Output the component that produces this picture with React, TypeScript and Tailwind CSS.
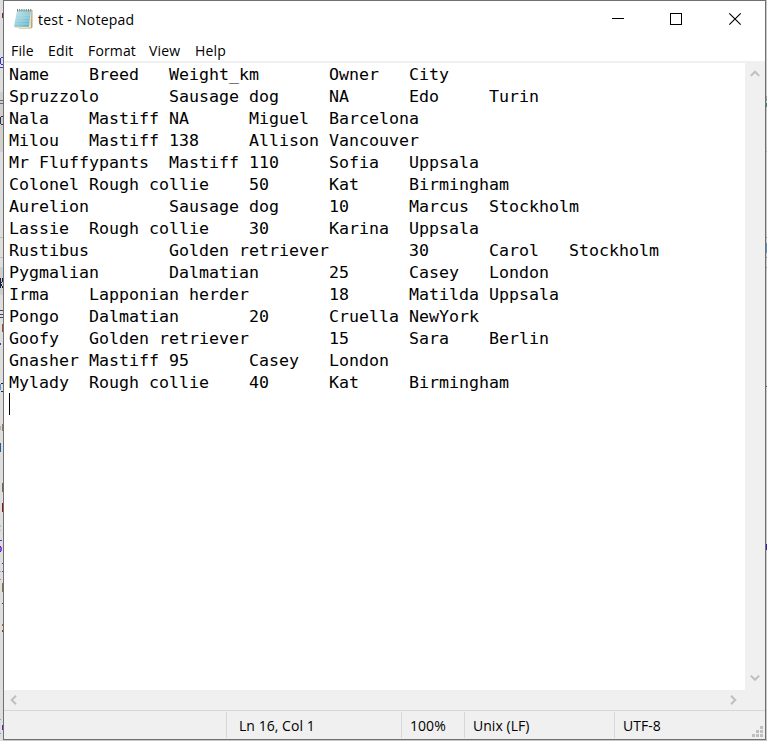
import React from "react";

const rows: string[] = [
  "Name\tBreed\tWeight_km\tOwner\tCity",
  "Spruzzolo\tSausage dog\tNA\tEdo\tTurin",
  "Nala\tMastiff\tNA\tMiguel\tBarcelona",
  "Milou\tMastiff\t138\tAllison\tVancouver",
  "Mr Fluffypants\tMastiff\t110\tSofia\tUppsala",
  "Colonel\tRough collie\t50\tKat\tBirmingham",
  "Aurelion\tSausage dog\t10\tMarcus\tStockholm",
  "Lassie\tRough collie\t30\tKarina\tUppsala",
  "Rustibus\tGolden retriever\t30\tCarol\tStockholm",
  "Pygmalian\tDalmatian\t25\tCasey\tLondon",
  "Irma\tLapponian herder\t18\tMatilda\tUppsala",
  "Pongo\tDalmatian\t20\tCruella\tNewYork",
  "Goofy\tGolden retriever\t15\tSara\tBerlin",
  "Gnasher\tMastiff\t95\tCasey\tLondon",
  "Mylady\tRough collie\t40\tKat\tBirmingham",
];

// Slivers of the editor behind the window: x, y, width, height, colour.
const leftMarks: [number, number, number, number, string][] = [
  [2, 13, 1, 5, "#7a3030"],
  [0, 58, 1, 6, "#3333dd"], [1, 57, 2, 1, "#3333dd"], [1, 64, 2, 1, "#3333dd"], [0, 67, 3, 1, "#3333dd"],
  [0, 92, 3, 60, "#cfcfcb"],
  [0, 100, 3, 1, "#666688"], [0, 103, 3, 1, "#666688"],
  [0, 117, 1, 7, "#333344"], [1, 116, 2, 1, "#333344"], [1, 124, 2, 1, "#333344"],
  [0, 237, 3, 1, "#bcbcbc"], [0, 257, 3, 1, "#bcbcbc"], [0, 267, 3, 28, "#cfcfcf"],
  [0, 278, 1, 10, "#16203a"], [2, 278, 1, 4, "#16203a"], [1, 282, 1, 1, "#16203a"], [1, 284, 1, 2, "#16203a"], [2, 286, 1, 2, "#16203a"],
  [0, 310, 3, 1, "#444466"], [0, 314, 3, 1, "#444466"], [0, 317, 3, 1, "#444466"],
  [2, 324, 1, 8, "#9a4a3a"], [0, 343, 1, 2, "#3333cc"],
  [1, 383, 2, 1, "#222233"], [0, 384, 1, 6, "#5599cc"], [1, 391, 2, 1, "#222233"],
  [0, 426, 1, 4, "#8ab8dd"], [2, 424, 1, 7, "#a8743a"], [0, 443, 1, 9, "#1560aa"],
  [2, 483, 1, 9, "#75654a"], [2, 503, 1, 9, "#8a1515"],
  [0, 525, 1, 2, "#88ccee"], [0, 530, 1, 1, "#88ccee"],
  [0, 540, 2, 1, "#5522ee"], [0, 547, 2, 4, "#9944dd"], [0, 546, 1, 1, "#2222dd"], [0, 551, 1, 1, "#2222dd"],
  [2, 563, 1, 1, "#5533aa"], [0, 571, 1, 1, "#99aadd"], [2, 571, 1, 1, "#5533aa"],
  [0, 579, 1, 1, "#bb77bb"], [2, 583, 1, 9, "#88703a"], [2, 603, 1, 1, "#5522aa"],
  [2, 624, 1, 2, "#b86615"], [2, 630, 1, 2, "#aa2244"],
  [0, 719, 1, 1, "#66aadd"], [2, 725, 1, 5, "#6622bb"], [0, 733, 1, 1, "#66aadd"],
];
const rightMarks: [number, number, number, number, string][] = [
  [0, 96, 1, 5, "#999999"], [0, 103, 1, 4, "#35905f"], [0, 151, 1, 1, "#aaaaaa"],
  [0, 237, 1, 1, "#888888"], [0, 243, 1, 10, "#5b92c5"], [0, 257, 1, 1, "#888888"],
  [0, 267, 1, 1, "#999999"], [0, 386, 1, 1, "#247878"], [0, 544, 1, 6, "#2824bb"],
];

function Strip({ width, marks }: { width: number; marks: [number, number, number, number, string][] }) {
  return (
    <svg className="shrink-0" width={width} height={741} shapeRendering="crispEdges" aria-hidden="true">
      <rect width={width} height="741" fill={width === 3 ? "#dededc" : "#c8c8c8"} />
      {marks.map(([x, y, w, h, c], i) => <rect key={i} x={x} y={y} width={w} height={h} fill={c} />)}
    </svg>
  );
}

function NotepadIcon() {
  return (
    <svg width="21" height="22" viewBox="0 0 21 22" aria-hidden="true">
      <defs>
        <linearGradient id="page" x1="0" y1="0" x2="1" y2="1">
          <stop offset="0" stopColor="#c9eaf1" />
          <stop offset="0.5" stopColor="#94cedb" />
          <stop offset="1" stopColor="#54a9bd" />
        </linearGradient>
      </defs>
      <path d="M4.5 2H19.5V19.5L18 20.5H6Z" fill="#bda578" />
      <path d="M4 2.5H18.5L17.8 19.5L15 20H2Z" fill="#e1e2cf" />
      <path d="M4 2.8H17.8L15.8 18.8H1Z" fill="url(#page)" />
      <path d="M3.5 7H17M3.2 10H16.7M2.8 13H16.3M2.3 16H16" stroke="#b8e1e9" strokeWidth=".6" />
      <path d="M4.5 1V3.5M6.7 1V3.5M8.9 1V3.5M11.1 1V3.5M13.3 1V3.5M15.5 1V3.5M17.7 1V3.5" stroke="#71868d" strokeWidth="1" />
      <path d="M15.8 18.8L18 16.5L17.5 19.7Z" fill="#efebcc" />
    </svg>
  );
}

function Chevron({ direction }: { direction: "up" | "down" | "left" | "right" }) {
  const paths = {
    up: "M.8 6.9L5 2.7L9.2 6.9",
    down: "M.8 2.6L5 6.8L9.2 2.6",
    left: "M7 .8L2.7 5L7 9.2",
    right: "M3 .8L7.3 5L3 9.2",
  };
  return <svg width="10" height="10" viewBox="0 0 10 10"><path d={paths[direction]} fill="none" stroke="#bfbfbf" strokeWidth="2" /></svg>;
}

export default function App() {
  return (
    <div className="flex h-[741px] w-[767px] overflow-hidden bg-[#c8c8c8] font-['Open_Sans','Noto_Sans',sans-serif] text-[14px] leading-[22px] whitespace-nowrap text-black">
      <Strip width={3} marks={leftMarks} />
      <main className="flex h-[740px] w-[763px] flex-col border border-[#707070] bg-white">
        <header className="flex h-[37px] shrink-0 items-start justify-between">
          <div className="flex items-start pt-[7px] pl-[9px]">
            <NotepadIcon />
            <h1 className="ml-1 pt-px tracking-[0.24px]">test - Notepad</h1>
          </div>
          <svg width="160" height="36" viewBox="0 0 160 36" fill="none" stroke="#000">
            <path d="M7 17.5H19" />
            <rect x="65.5" y="12.5" width="11" height="11" />
            <path d="M124.3 12.3L135.7 23.7M135.7 12.3L124.3 23.7" strokeWidth="1.15" />
          </svg>
        </header>
        <nav className="flex h-[23px] shrink-0 items-start pt-[2px] pl-[7px] tracking-[0.15px]">
          <span className="w-[37px]">File</span>
          <span className="w-10">Edit</span>
          <span className="w-[61px]">Format</span>
          <span className="w-[46px]">View</span>
          <span>Help</span>
        </nav>
        <div className="h-[2px] shrink-0 bg-[#f0f0f0]" />
        <div className="flex h-[627px] shrink-0">
          <section className="w-[741px] overflow-hidden pt-px pl-[5px] font-['DejaVu_Sans_Mono',monospace] text-[16.61px] leading-[22px]">
            {rows.map((row) => <div key={row} className="h-[22px] whitespace-pre [tab-size:8]">{row}</div>)}
            <div className="-mt-px h-[22px] w-px bg-black" />
          </section>
          <aside className="flex w-5 flex-col items-center justify-between bg-[#f0f0f0] pt-[6px] pb-[7px]">
            <Chevron direction="up" />
            <Chevron direction="down" />
          </aside>
        </div>
        <div className="flex h-5 shrink-0 items-center justify-between bg-[#f0f0f0] pr-[27px] pl-[5px]">
          <Chevron direction="left" />
          <Chevron direction="right" />
        </div>
        <footer className="flex h-[29px] shrink-0 border-t border-[#d7d7d7] bg-[#f0f0f0] tracking-[0.04px]">
          <div className="mt-px h-[26px] w-[223px] border-r border-[#d7d7d7]" />
          <div className="mt-px h-[26px] w-[175px] border-r border-[#d7d7d7] pt-[3px] pl-[12px]">Ln 16, Col 1</div>
          <div className="mt-px h-[26px] w-[63px] border-r border-[#d7d7d7] pt-[3px] pl-[8px]">100%</div>
          <div className="mt-px h-[26px] w-[150px] border-r border-[#d7d7d7] pt-[3px] pl-[8px]">Unix (LF)</div>
          <div className="mt-px flex-1 pt-[3px] pl-[8px]">UTF-8</div>
          <svg width="14" height="27" viewBox="0 0 14 27" fill="#bfbfbf" shapeRendering="crispEdges">
            <path d="M9 15h3v3H9zM5 19h3v3H5zM9 19h3v3H9zM1 23h3v3H1zM5 23h3v3H5zM9 23h3v3H9z" />
          </svg>
        </footer>
      </main>
      <Strip width={1} marks={rightMarks} />
    </div>
  );
}
